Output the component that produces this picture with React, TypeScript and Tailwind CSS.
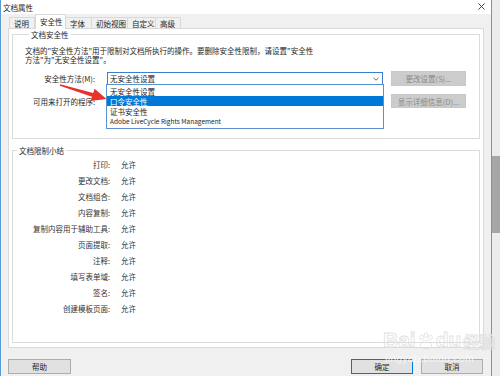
import React from "react";

const tabs = [
  { label: "说明", w: "w-[26px]" },
  { label: "安全性", w: "w-[31px]", active: true },
  { label: "字体", w: "w-[27px]" },
  { label: "初始视图", w: "w-[37px]" },
  { label: "自定义", w: "w-[29px]" },
  { label: "高级", w: "w-[26px]" },
];

const rows = [
  "打印",
  "更改文档",
  "文档组合",
  "内容复制",
  "复制内容用于辅助工具",
  "页面提取",
  "注释",
  "填写表单域",
  "签名",
  "创建模板页面",
];

export default function App() {
  return (
    <div className="relative w-[500px] h-[376px] overflow-hidden bg-[#f0f0f0] flex font-['Noto_Sans_CJK_SC',sans-serif] text-[7.5px] leading-[9px] text-[#1e1e1e]">
      {/* window */}
      <div className="w-[492px] h-full flex flex-col border-l border-r border-[#5b9bd5] bg-[#f0f0f0]">
        {/* title bar */}
        <div className="h-[14px] bg-white flex items-center justify-between pl-[2px] pr-[6px]">
          <span>文档属性</span>
          <svg width="7" height="7" viewBox="0 0 7 7" className="mt-[-1px]">
            <path d="M0.5 0.5 L6.5 6.5 M6.5 0.5 L0.5 6.5" stroke="#333" strokeWidth="0.9" />
          </svg>
        </div>
        {/* tabs */}
        <div className="h-[14px] flex items-end pl-[8px]">
          {tabs.map((t) =>
            t.active ? (
              <div
                key={t.label}
                className={`${t.w} relative z-10 h-[15px] -mb-px bg-white border border-b-0 border-[#d9d9d9] flex items-center pl-[4px] pb-[2px]`}
              >
                {t.label}
              </div>
            ) : (
              <div
                key={t.label}
                className={`${t.w} h-[11px] bg-[#f0f0f0] border border-b-0 border-[#d9d9d9] -ml-px first:ml-0 flex items-center pl-[4px]`}
              >
                {t.label}
              </div>
            )
          )}
        </div>
        {/* panel */}
        <div className="ml-[7px] w-[476px] h-[320px] bg-white border border-[#d9d9d9] px-[3px] pt-[1px] flex flex-col">
          {/* group 1 */}
          <fieldset className="h-[109px] border border-[#dcdcdc] pl-[12px]">
            <legend className="ml-[4px] px-[2px] leading-[9px]">文档安全性</legend>
            <div className="mt-[7px] leading-[9px]">
              <div>文档的"安全性方法"用于限制对文档所执行的操作。要删除安全性限制，请设置"安全性</div>
              <div>方法"为"无安全性设置"。</div>
            </div>
            <div className="mt-[7px] flex items-center h-[15px]">
              <div className="w-[70px] text-right">安全性方法(M):</div>
              <div className="relative ml-[12px] w-[276px] h-[13px] border border-[#3c7fd1] bg-white flex items-center justify-between pl-[2px] pr-[3px]">
                <span>无安全性设置</span>
                <svg width="6" height="4" viewBox="0 0 6 4">
                  <path d="M0.5 0.8 L3 3.2 L5.5 0.8" stroke="#555" strokeWidth="0.9" fill="none" />
                </svg>
                {/* dropdown list */}
                <div className="absolute left-[-2px] top-[11px] w-[278px] h-[45px] z-20 bg-white border border-[#5a8fd0] pt-[1px] flex flex-col">
                  <div className="h-[10px] flex items-center pl-[3px]">无安全性设置</div>
                  <div className="h-[10px] flex items-center pl-[3px] bg-[#0078d7] text-white">口令安全性</div>
                  <div className="h-[10px] flex items-center pl-[3px]">证书安全性</div>
                  <div className="h-[10px] flex items-center pl-[3px] text-[6.5px]">Adobe LiveCycle Rights Management</div>
                </div>
              </div>
              <div className="ml-[8px] w-[75px] h-[15px] bg-[#cccccc] border border-[#c8c8c8] text-[#8a8a8a] flex items-center justify-center">
                更改设置(S)...
              </div>
            </div>
            <div className="mt-[8px] flex items-center h-[14px]">
              <div className="w-[70px] text-right">可用来打开的程序:</div>
              <div className="ml-[296px] w-[75px] h-[14px] bg-[#cccccc] border border-[#c8c8c8] text-[#8a8a8a] flex items-center justify-center">
                显示详细信息(D)...
              </div>
            </div>
          </fieldset>
          {/* group 2 */}
          <fieldset className="mt-[7px] h-[197px] border border-[#dcdcdc]">
            <legend className="ml-[4px] px-[2px] leading-[9px]">文档限制小结</legend>
            <div className="mt-[1px] flex flex-col">
              {rows.map((r) => (
                <div key={r} className="h-[16.1px] flex items-center text-[#333]">
                  <div className="w-[97px] text-right">{r}:</div>
                  <div className="ml-[11px]">允许</div>
                </div>
              ))}
            </div>
          </fieldset>
        </div>
        {/* bottom buttons */}
        <div className="mt-[11px] flex items-center pl-[7px]">
          <div className="w-[63px] h-[15px] bg-[#e1e1e1] border border-[#adadad] flex items-center justify-center">
            帮助
          </div>
          <div className="ml-[280px] w-[62px] h-[15px] bg-[#e1e1e1] border border-[#0078d7] flex items-center justify-center">
            确定
          </div>
          <div className="ml-[8px] w-[62px] h-[15px] bg-[#e1e1e1] border border-[#adadad] flex items-center justify-center">
            取消
          </div>
        </div>
      </div>
      {/* scrollbar */}
      <div className="w-[8px] h-full bg-[#ececec] flex flex-col">
        <div className="mt-[156px] h-[77px] bg-[#a6a6a6]" />
      </div>

      {/* red annotation arrow */}
      <svg className="absolute left-0 top-0 pointer-events-none z-30" width="500" height="376">
        <polygon
          points="60.15,84.3 93.2,93 94.6,88.8 106.5,99 90.6,101 92,96.8 59.85,85.7"
          fill="#e8322e"
        />
      </svg>

      {/* watermark */}
      <div className="absolute left-[383px] top-[330px] z-30 pointer-events-none flex flex-col items-start">
        <div className="h-[20px] flex items-end text-[21px] leading-[20px] font-bold text-transparent [-webkit-text-stroke:0.8px_#e0e0e0] font-['Liberation_Sans',sans-serif]">
          <span>Bai</span>
          <svg width="18" height="18" viewBox="0 0 20 20" className="mx-[1px]">
            <g fill="none" stroke="#e0e0e0" strokeWidth="1">
              <ellipse cx="5" cy="6" rx="2" ry="2.6" />
              <ellipse cx="10" cy="3.5" rx="2" ry="2.6" />
              <ellipse cx="15" cy="6" rx="2" ry="2.6" />
              <path d="M4 17 C3 12 8 9 10 9 C12 9 17 12 16 17 C14 19 6 19 4 17 Z" />
            </g>
          </svg>
          <span>du</span>
          <span className="ml-[2px] text-[16px] leading-[18px] font-['Noto_Sans_CJK_SC',sans-serif]">经验</span>
        </div>
        <div className="mt-[4px] ml-[2px] text-[10px] leading-[10px] text-[#f7f7f7] font-['Liberation_Sans',sans-serif] tracking-[0.5px]">
          jingyan.baidu.com
        </div>
      </div>
    </div>
  );
}
